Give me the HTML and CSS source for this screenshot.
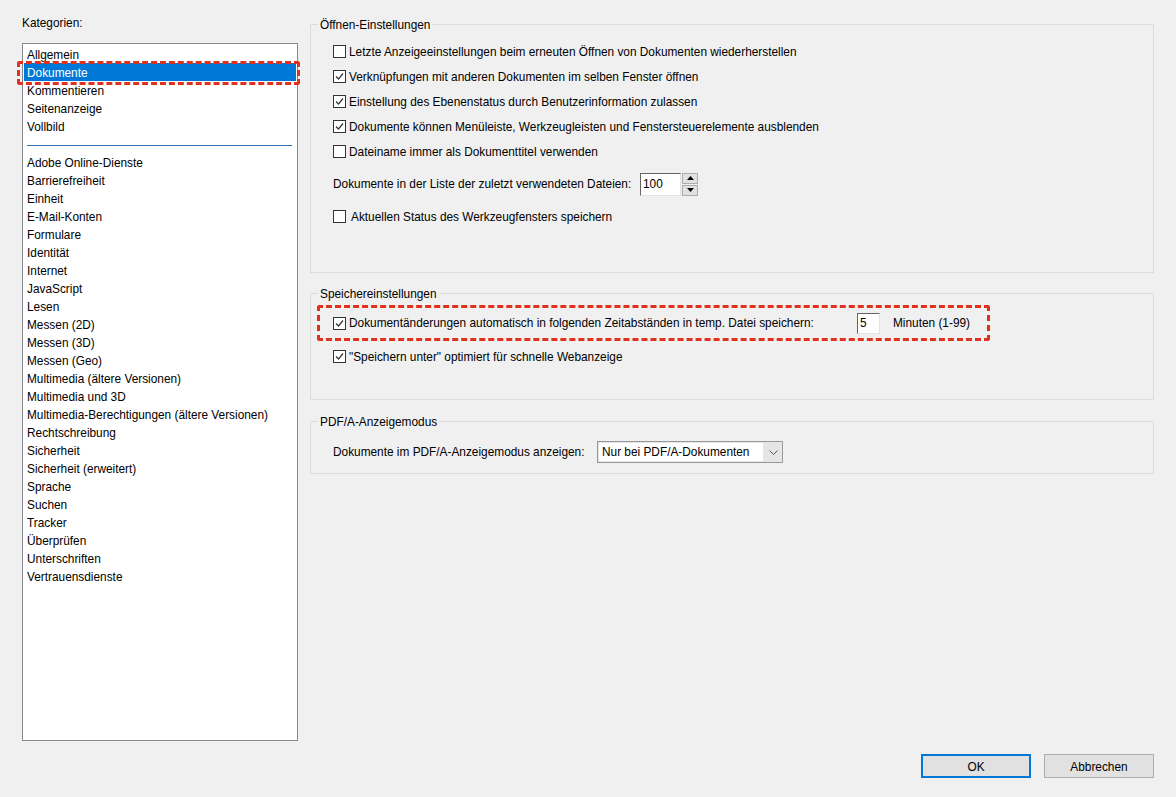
FILE: index.html
```html
<!DOCTYPE html>
<html lang="de">
<head>
    <meta charset="UTF-8">
    <meta name="viewport" content="width=device-width, initial-scale=1.0">
    <title>Voreinstellungen</title>
    <link rel="stylesheet" href="styles.css">
</head>
<body>
    <div class="dialog-body">
        <div class="categories">
            <div class="categories-label">Kategorien:</div>
            <ul class="category-list">
                <li>Allgemein</li>
                <li class="selected">Dokumente<span class="annotation"></span></li>
                <li>Kommentieren</li>
                <li>Seitenanzeige</li>
                <li>Vollbild</li>
                <li class="separator"></li>
                <li>Adobe Online-Dienste</li>
                <li>Barrierefreiheit</li>
                <li>Einheit</li>
                <li>E-Mail-Konten</li>
                <li>Formulare</li>
                <li>Identität</li>
                <li>Internet</li>
                <li>JavaScript</li>
                <li>Lesen</li>
                <li>Messen (2D)</li>
                <li>Messen (3D)</li>
                <li>Messen (Geo)</li>
                <li>Multimedia (ältere Versionen)</li>
                <li>Multimedia und 3D</li>
                <li>Multimedia-Berechtigungen (ältere Versionen)</li>
                <li>Rechtschreibung</li>
                <li>Sicherheit</li>
                <li>Sicherheit (erweitert)</li>
                <li>Sprache</li>
                <li>Suchen</li>
                <li>Tracker</li>
                <li>Überprüfen</li>
                <li>Unterschriften</li>
                <li>Vertrauensdienste</li>
            </ul>
        </div>

        <div class="settings">
            <fieldset class="group">
                <legend>Öffnen-Einstellungen</legend>
                <div class="group-body open-body">
                    <div class="option"><span class="check"></span>Letzte Anzeigeeinstellungen beim erneuten Öffnen von Dokumenten wiederherstellen</div>
                    <div class="option"><span class="check"><svg width="11" height="11" viewBox="0 0 11 11"><polyline points="2,5.5 4.5,8 9,2.5" /></svg></span>Verknüpfungen mit anderen Dokumenten im selben Fenster öffnen</div>
                    <div class="option"><span class="check"><svg width="11" height="11" viewBox="0 0 11 11"><polyline points="2,5.5 4.5,8 9,2.5" /></svg></span>Einstellung des Ebenenstatus durch Benutzerinformation zulassen</div>
                    <div class="option"><span class="check"><svg width="11" height="11" viewBox="0 0 11 11"><polyline points="2,5.5 4.5,8 9,2.5" /></svg></span>Dokumente können Menüleiste, Werkzeugleisten und Fenstersteuerelemente ausblenden</div>
                    <div class="option"><span class="check"></span>Dateiname immer als Dokumenttitel verwenden</div>
                    <div class="spin-row">
                        <span class="spin-label">Dokumente in der Liste der zuletzt verwendeten Dateien:</span>
                        <span class="text-field spin-field">100</span>
                        <span class="spin-buttons">
                            <span class="spin-btn"><svg width="7" height="4" viewBox="0 0 7 4"><polygon points="3.5,0 7,4 0,4" /></svg></span>
                            <span class="spin-btn"><svg width="7" height="4" viewBox="0 0 7 4"><polygon points="0,0 7,0 3.5,4" /></svg></span>
                        </span>
                    </div>
                    <div class="option wide"><span class="check"></span>Aktuellen Status des Werkzeugfensters speichern</div>
                </div>
            </fieldset>

            <fieldset class="group">
                <legend>Speichereinstellungen</legend>
                <div class="group-body save-body">
                    <div class="option autosave">
                        <span class="check"><svg width="11" height="11" viewBox="0 0 11 11"><polyline points="2,5.5 4.5,8 9,2.5" /></svg></span>
                        <span class="autosave-label">Dokumentänderungen automatisch in folgenden Zeitabständen in temp. Datei speichern:</span>
                        <span class="text-field minutes-field">5</span>
                        <span class="minutes-label">Minuten (1-99)</span>
                        <span class="annotation"></span>
                    </div>
                    <div class="option second"><span class="check"><svg width="11" height="11" viewBox="0 0 11 11"><polyline points="2,5.5 4.5,8 9,2.5" /></svg></span>"Speichern unter" optimiert für schnelle Webanzeige</div>
                </div>
            </fieldset>

            <fieldset class="group">
                <legend>PDF/A-Anzeigemodus</legend>
                <div class="group-body pdfa-body">
                    <div class="select-row">
                        <span class="select-label">Dokumente im PDF/A-Anzeigemodus anzeigen:</span>
                        <span class="select">
                            <span class="select-value">Nur bei PDF/A-Dokumenten</span>
                            <svg class="chevron" width="9" height="5" viewBox="0 0 9 5"><polyline points="0.5,0.5 4.5,4.5 8.5,0.5" /></svg>
                        </span>
                    </div>
                </div>
            </fieldset>
        </div>
    </div>

    <div class="dialog-footer">
        <button class="btn btn-primary">OK</button>
        <button class="btn">Abbrechen</button>
    </div>
</body>
</html>
```

FILE: styles.css
```css
body {
    margin: 0;
    width: 1176px;
    height: 797px;
    overflow: hidden;
    background-color: #f0f0f0;
    font-family: "Liberation Sans", Arial, sans-serif;
    font-size: 11.85px;
    color: #000;
}
.dialog-body {
    display: flex;
    gap: 12px;
    padding: 13px 22px 0 22px;
}
.categories {
    width: 276px;
    flex: none;
}
.categories-label {
    height: 18px;
    line-height: 20px;
    margin-bottom: 12px;
}
.category-list {
    list-style: none;
    margin: 0;
    padding: 1px;
    height: 698px;
    box-sizing: border-box;
    border: 1px solid #828790;
    background-color: #fff;
}
.category-list li {
    position: relative;
    height: 18px;
    line-height: 20px;
    padding-left: 3px;
    white-space: nowrap;
}
.category-list li.selected {
    background-color: #0078d7;
    color: #fff;
}
.category-list li.separator {
    height: 1px;
    padding: 0;
    margin: 10px 4px 7px 3px;
    background-color: #2f6fb3;
}
.annotation {
    position: absolute;
    box-sizing: border-box;
    border: 3px dashed #e2301f;
    border-radius: 3px;
    pointer-events: none;
}
.selected .annotation {
    top: -2px;
    left: -7px;
    right: -4px;
    bottom: -4px;
}
.settings {
    flex: 1;
    margin-top: 2px;
}
.group {
    margin: 0 0 11px 0;
    padding: 0;
    min-width: 0;
    border: 1px solid #dcdcdc;
}
.group + .group + .group {
    margin-top: 12px;
}
.group legend {
    margin-left: 7px;
    padding: 0 2px;
    height: 18px;
    line-height: 20px;
}
.group-body {
    padding: 0 22px;
}
.open-body {
    padding-top: 6px;
    padding-bottom: 43px;
}
.save-body {
    padding-top: 8px;
    padding-bottom: 30px;
}
.pdfa-body {
    padding-top: 10px;
    padding-bottom: 9px;
}
.option {
    display: flex;
    align-items: center;
    height: 25px;
    white-space: nowrap;
}
.check {
    display: inline-flex;
    align-items: center;
    justify-content: center;
    width: 13px;
    height: 13px;
    box-sizing: border-box;
    margin-right: 3px;
    border: 1px solid #333;
    background-color: #fff;
    flex: none;
}
.check polyline {
    fill: none;
    stroke: #333;
    stroke-width: 1.2;
}
.option.wide .check {
    margin-right: 5px;
}
.spin-row {
    display: flex;
    align-items: center;
    height: 40px;
}
.spin-label {
    width: 307px;
}
.text-field {
    box-sizing: border-box;
    background-color: #fff;
    border: 1px solid;
    border-color: #646464 #e3e3e3 #e3e3e3 #646464;
    padding-left: 2px;
    line-height: 19px;
}
.spin-field {
    width: 41px;
    height: 23px;
    line-height: 20px;
}
.spin-buttons {
    display: flex;
    flex-direction: column;
    gap: 1px;
    margin-left: 1px;
}
.spin-btn {
    display: flex;
    align-items: center;
    justify-content: center;
    width: 16px;
    height: 11px;
    box-sizing: border-box;
    background-color: #e1e1e1;
    border: 1px solid #adadad;
}
.spin-btn polygon {
    fill: #000;
}
.autosave {
    position: relative;
    height: 26px;
}
.autosave-label {
    width: 508px;
}
.minutes-field {
    width: 23px;
    height: 21px;
}
.minutes-label {
    margin-left: 13px;
}
.autosave .annotation {
    top: -5px;
    left: -16px;
    width: 673px;
    height: 36px;
}
.option.second {
    margin-top: 8px;
}
.select-row {
    display: flex;
    align-items: center;
    height: 24px;
}
.select-label {
    width: 264px;
}
.select {
    display: flex;
    align-items: center;
    width: 186px;
    height: 22px;
    box-sizing: border-box;
    border: 1px solid #999;
    background-color: #e5e5e5;
    padding: 1px;
}
.select-value {
    width: 164px;
    height: 18px;
    line-height: 19px;
    padding-left: 3px;
    box-sizing: border-box;
    background-color: #fff;
}
.chevron {
    margin-left: 6px;
}
.chevron polyline {
    fill: none;
    stroke: #555;
    stroke-width: 1;
}
.dialog-footer {
    display: flex;
    justify-content: flex-end;
    gap: 13px;
    padding: 13px 22px 0 0;
}
.btn {
    width: 110px;
    height: 24px;
    box-sizing: border-box;
    background-color: #e1e1e1;
    border: 1px solid #adadad;
    font-family: inherit;
    font-size: 11.85px;
    color: #000;
    padding: 2px 0 0 0;
}
.btn-primary {
    border: 2px solid #0078d7;
}
```
